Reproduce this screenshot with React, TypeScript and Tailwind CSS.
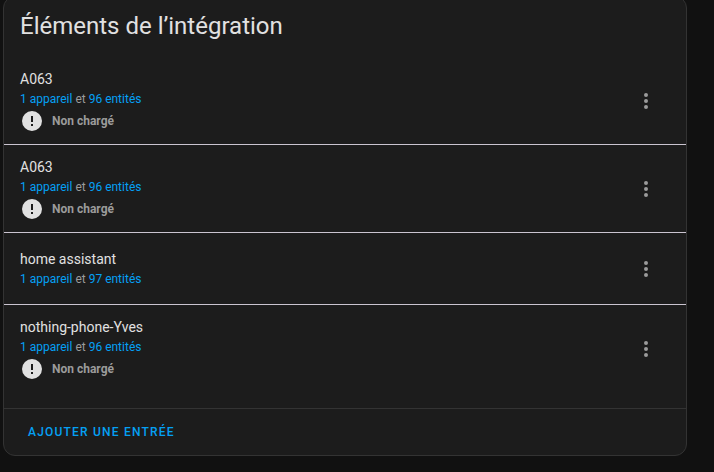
type Entry = { id: number; name: string; entities: number; loaded: boolean };

const entries: Entry[] = [
  { id: 1, name: "A063", entities: 96, loaded: false },
  { id: 2, name: "A063", entities: 96, loaded: false },
  { id: 3, name: "home assistant", entities: 97, loaded: true },
  { id: 4, name: "nothing-phone-Yves", entities: 96, loaded: false },
];

function AlertIcon() {
  return (
    <svg viewBox="0 0 24 24" className="size-6 shrink-0 fill-[#e1e1e1]" aria-hidden="true">
      <path d="M13 13h-2V7h2m0 10h-2v-2h2M12 2A10 10 0 0 0 2 12a10 10 0 0 0 10 10 10 10 0 0 0 10-10A10 10 0 0 0 12 2z" />
    </svg>
  );
}

function DotsIcon() {
  return (
    <svg viewBox="0 0 24 24" className="size-6 fill-[#9b9b9b]" aria-hidden="true">
      <path d="M12 16a2 2 0 0 1 2 2 2 2 0 0 1-2 2 2 2 0 0 1-2-2 2 2 0 0 1 2-2m0-6a2 2 0 0 1 2 2 2 2 0 0 1-2 2 2 2 0 0 1-2-2 2 2 0 0 1 2-2m0-6a2 2 0 0 1 2 2 2 2 0 0 1-2 2 2 2 0 0 1-2-2 2 2 0 0 1 2-2z" />
    </svg>
  );
}

function EntryRow({ entry }: { entry: Entry }) {
  return (
    <li className="flex min-h-[72px] items-center justify-between border-b border-[#cac4d0] px-4 pt-3 pb-[11px] last:border-b-0">
      <div>
        <h2 className="text-sm leading-5 text-[#e1e1e1]">{entry.name}</h2>
        <p className="text-xs leading-5 text-[#9b9b9b]">
          <a href="#devices" className="text-[#04a0f4]">1 appareil</a> et{" "}
          <a href="#entities" className="text-[#04a0f4]">{entry.entities} entités</a>
        </p>
        {!entry.loaded && (
          <div className="flex items-center gap-2 text-xs leading-6 font-bold text-[#9b9b9b]">
            <AlertIcon />
            <span>Non chargé</span>
          </div>
        )}
      </div>
      <button type="button" aria-label="Menu" className="flex size-12 items-center justify-center rounded-full">
        <DotsIcon />
      </button>
    </li>
  );
}

export default function App() {
  return (
    <div className="min-h-screen overflow-hidden bg-[#111111] pr-[27px] pl-[3px] font-[Roboto,sans-serif]">
      <main className="-mt-1 rounded-xl border border-[#333333] bg-[#1c1c1c]">
        <h1 className="px-4 pt-[5px] pb-[7px] text-2xl leading-[48px] text-[#e1e1e1]">Éléments de l’intégration</h1>
        <ul className="pb-4">
          {entries.map((entry) => (
            <EntryRow key={entry.id} entry={entry} />
          ))}
        </ul>
        <footer className="border-t border-[#333333] px-2 py-[5px]">
          <button type="button" className="h-9 rounded px-4 text-xs font-medium tracking-widest text-[#04a0f4] uppercase">
            Ajouter une entrée
          </button>
        </footer>
      </main>
    </div>
  );
}
